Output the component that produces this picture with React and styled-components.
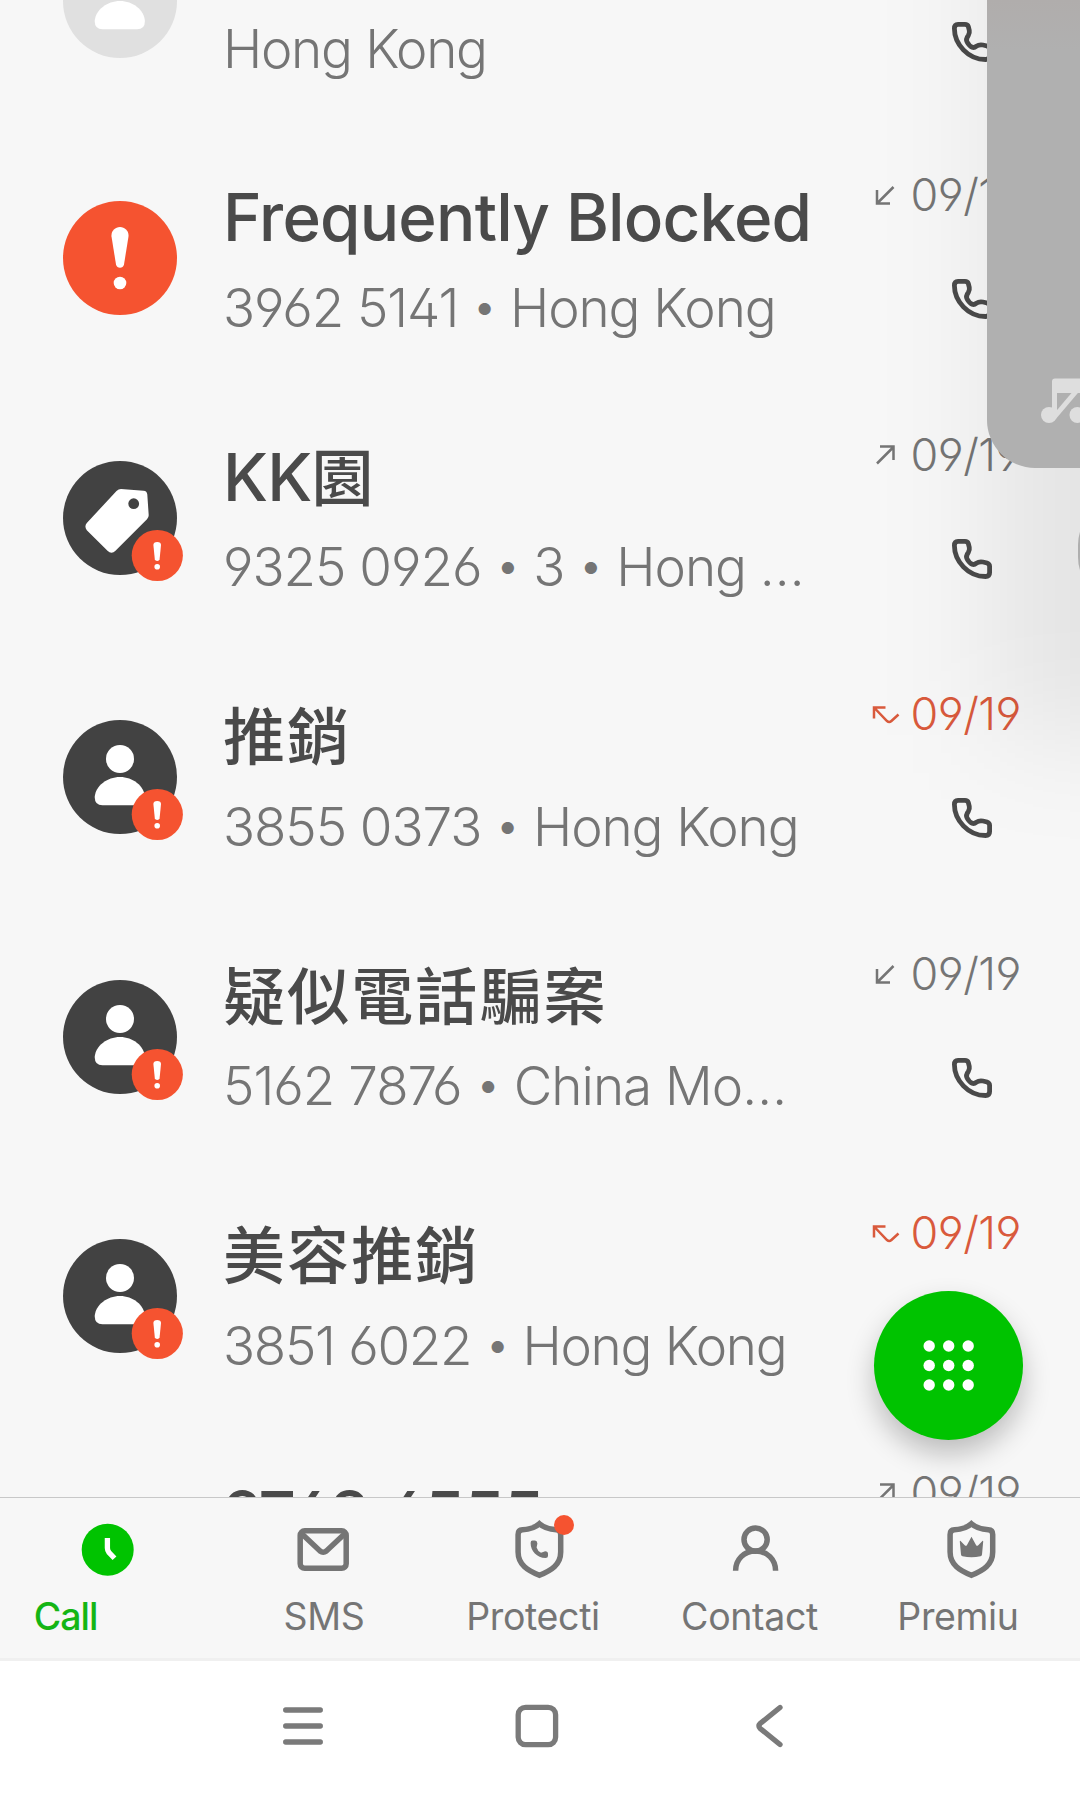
import React from 'react';
import styled, { createGlobalStyle, css } from 'styled-components';

const calls = [
  { id: 0, avatar: 'unknown', sub: 'Hong Kong', tight: 1.3 },
  { id: 1, avatar: 'blocked', title: 'Frequently Blocked', sub: '3962 5141 • Hong Kong', tight: 1.1, type: 'incoming', date: '09/19' },
  { id: 2, avatar: 'tag', title: 'KK', cjkTitle: '園', sub: '9325 0926 • 3 • Hong …', tight: 1.05, type: 'outgoing', date: '09/19' },
  { id: 3, avatar: 'person', cjkTitle: '推銷', sub: '3855 0373 • Hong Kong', tight: 1.1, type: 'missed', date: '09/19' },
  { id: 4, avatar: 'person', cjkTitle: '疑似電話騙案', sub: '5162 7876 • China Mo…', tight: 1, type: 'incoming', date: '09/19' },
  { id: 5, avatar: 'person', cjkTitle: '美容推銷', sub: '3851 6022 • Hong Kong', tight: 1.3, type: 'missed', date: '09/19' },
  { id: 6, avatar: 'unknown', title: '9768 6555', type: 'outgoing', date: '09/19' },
];

const tabs = [
  { name: 'call', text: 'Call', shift: 85 },
  { name: 'sms', text: 'SMS', shift: 0 },
  { name: 'protect', text: 'Protecti', shift: 14 },
  { name: 'contact', text: 'Contact', shift: 13 },
  { name: 'premium', text: 'Premiu', shift: 28 },
];

const arrowPaths = {
  incoming: 'M22.5 4 L6 20.5 M6 7 V20.5 H19',
  outgoing: 'M6 20.5 L22.5 4 M9 3.5 H22.5 V17',
  missed: 'M3 16.5 V5.5 H14.5 M3.5 6 L16 19 Q18.2 21 20.4 19 L27.5 12.5',
};

const avatarColors = {
  unknown: '#e0e0e0',
  blocked: '#f55330',
  tag: '#424242',
  person: '#424242',
};

const SHIELD =
  'M29.4 3.8 C25 8 18 9.5 12.5 9.8 Q8.1 10 8.1 14.5 V32 C8.1 45 18 50.5 29.4 55.3 C41 50.5 50.7 45 50.7 32 V14.5 Q50.7 10 46.3 9.8 C41 9.5 34 8 29.4 3.8 Z';

function Avatar({ kind }) {
  return (
    <AvatarIcon viewBox="0 0 114 114">
      <circle cx="57" cy="57" r="57" fill={avatarColors[kind]} />
      {(kind === 'person' || kind === 'unknown') && (
        <g fill="#fff">
          <circle cx="57" cy="39" r="14" />
          <path d="M31.7 77 C32.5 66 44 57 57 57 S81.2 66 81.9 77 Q82 85.3 74 85.3 H39.5 Q31.7 85.3 31.7 77 Z" />
        </g>
      )}
      {kind === 'tag' && (
        <>
          <path
            fill="#fff"
            d="M58 28 L80.5 29.8 Q84 30 84.3 33.5 L85.7 54 Q85.8 56.5 84 58.3 L52.5 89.8 Q48.5 93.5 44.5 89.8 L23.8 69.2 Q21 65.5 23.8 62 L53.5 30 Q55.5 28 58 28 Z"
          />
          <circle cx="70.7" cy="42.7" r="5.4" fill="#424242" />
        </>
      )}
      {kind === 'blocked' && (
        <g fill="#fff">
          <path d="M57 26 C62 26 66 30 65.5 35.5 L61 63.5 Q60 66.8 57 66.8 T53 63.5 L48.5 35.5 C48 30 52 26 57 26 Z" />
          <circle cx="57" cy="82" r="6.3" />
        </g>
      )}
      {(kind === 'person' || kind === 'tag') && (
        <>
          <circle cx="94.3" cy="94.5" r="25.6" fill="#f55330" />
          <path fill="#fff" d="M90.4 84 Q90.4 81 94.2 81 T98 84 L96.6 98.3 Q96.2 100 94.2 100 T91.8 98.3 Z" />
          <circle cx="94.2" cy="105.8" r="2.8" fill="#fff" />
        </>
      )}
    </AvatarIcon>
  );
}

function Phone() {
  return (
    <PhoneIcon viewBox="0 0 40 40">
      <path d="M6 2.4 H13 Q15.6 2.4 16.3 4.5 L17.3 8.5 Q17.8 11 16.3 13.5 Q13.6 17 15 19.8 Q17.3 24 20.2 25.3 Q22.3 26 24.5 24.2 Q27 22.3 31 23 L35 24 Q37.6 25 37.6 27.5 V33.5 Q37.6 37.5 33.5 37.5 C16 37.5 2.4 22 2.4 6.5 Q2.4 2.4 6 2.4 Z" />
    </PhoneIcon>
  );
}

function TabIcon({ name }) {
  return (
    <TabSvg viewBox="0 0 60 60">
      {name === 'call' && (
        <>
          <circle cx="29.7" cy="29.7" r="26" fill="#00c300" stroke="none" />
          <path d="M29.4 18 V28 Q29.4 30.5 31 32.5 L36.5 38.3" stroke="#fff" strokeWidth="5.3" />
        </>
      )}
      {name === 'sms' && (
        <>
          <rect x="6.2" y="10.8" width="46" height="37.5" rx="4.5" />
          <path d="M7.5 13.5 L26 31 Q29.2 33.4 32.4 31 L51 13.5" />
        </>
      )}
      {(name === 'protect' || name === 'premium') && <path d={SHIELD} />}
      {name === 'protect' && (
        <path
          fill="#757575"
          stroke="none"
          d="M22.5 20.6 H25 Q27.2 20.8 27.4 23.5 L26.6 27.5 Q27.6 31 31 32.8 L35.2 31.3 Q38 31.5 38 33.8 V36 Q38 38 35.5 38 C27 37.8 20.6 31 20.6 23 Q20.6 20.6 22.5 20.6 Z"
        />
      )}
      {name === 'premium' && (
        <path
          fill="#757575"
          stroke="none"
          d="M18.6 20.9 L23 25.6 Q24.2 26.3 25 25 L29.5 16.7 L34 25 Q34.8 26.3 36 25.6 L40.4 20.9 Q41.2 20.7 41.2 21.6 L40 34.6 Q39.8 36 38.5 36.3 Q29.5 38 20.5 36.3 Q19.2 36 19 34.6 L17.8 21.6 Q17.8 20.7 18.6 20.9 Z"
        />
      )}
      {name === 'contact' && (
        <>
          <circle cx="29.6" cy="19.6" r="11.6" />
          <path d="M9.6 50.8 C9.6 39.5 18 31 29.6 31 S49.6 39.5 49.6 50.8" />
        </>
      )}
    </TabSvg>
  );
}

function CallRow({ call, first }) {
  return (
    <Row $first={first}>
      <Avatar kind={call.avatar} />
      <Info $first={first}>
        <Title>
          {call.title}
          {call.cjkTitle && <CjkText>{call.cjkTitle}</CjkText>}
        </Title>
        {call.sub && (
          <Sub $tight={call.tight}>
            {call.sub.split('•').map((part, i) => (
              <React.Fragment key={i}>
                {i > 0 && <Bullet>•</Bullet>}
                {part}
              </React.Fragment>
            ))}
          </Sub>
        )}
      </Info>
      <Meta>
        <DateLine $missed={call.type === 'missed'}>
          {call.date && (
            <>
              <ArrowIcon viewBox="0 0 30 24">
                <path d={arrowPaths[call.type]} />
              </ArrowIcon>
              <span>{call.date}</span>
            </>
          )}
        </DateLine>
        <Phone />
      </Meta>
    </Row>
  );
}

function App() {
  return (
    <Screen>
      <GlobalStyle />
      <CallArea>
        <CallList>
          {calls.map((call) => (
            <CallRow key={call.id} call={call} first={call.id === 0} />
          ))}
        </CallList>
        <DialButton aria-label="Keypad">
          <svg width="60" height="60" viewBox="0 0 60 60" fill="#fff">
            {[10, 29.5, 49].map((y) =>
              [10.2, 29.7, 49.2].map((x) => <circle key={`${x}-${y}`} cx={x} cy={y} r="5.7" />)
            )}
          </svg>
        </DialButton>
      </CallArea>

      <TabBar>
        {tabs.map((tab) => (
          <Tab key={tab.name}>
            <IconHolder>
              <TabIcon name={tab.name} />
              {tab.name === 'protect' && <RedDot />}
            </IconHolder>
            <TabText $active={tab.name === 'call'} $shift={tab.shift}>
              {tab.text}
            </TabText>
          </Tab>
        ))}
      </TabBar>

      <SystemBar>
        <SystemIcon viewBox="0 0 60 60">
          <path d="M12.7 14 H47.3 M12.7 30 H47.3 M12.7 46 H47.3" />
        </SystemIcon>
        <SystemIcon viewBox="0 0 60 60">
          <rect x="11.2" y="11.3" width="37.4" height="37.4" rx="7.5" />
        </SystemIcon>
        <SystemIcon viewBox="0 0 60 60">
          <path d="M39 11.5 L19.2 27.5 Q16.6 30 19.2 32.5 L39 48.5" />
        </SystemIcon>
      </SystemBar>

      <PanelShade />
      <VolumePanel>
        <svg width="60" height="60" viewBox="0 0 60 60">
          <g fill="#dedede">
            <circle cx="22" cy="35" r="8" />
            <circle cx="50.5" cy="35" r="8" />
            <path d="M25 35 V1.5 Q25 -1.5 28 -1.5 H60 V13 H30 V35 Z" />
          </g>
          <path d="M26.5 38 L54 5.5" stroke="#dedede" strokeWidth="5" />
        </svg>
      </VolumePanel>
      <PanelHandle />
    </Screen>
  );
}

const GlobalStyle = createGlobalStyle`
  body {
    margin: 0;
    background: #f7f7f7;
    font-family: Inter, 'Noto Sans CJK TC', sans-serif;
  }
`;

const Screen = styled.div`
  position: relative;
  display: flex;
  flex-direction: column;
  width: 1080px;
  height: 1793px;
  overflow: hidden;
  background: #f7f7f7;
`;

const CallArea = styled.main`
  position: relative;
  height: 1497px;
`;

const CallList = styled.div`
  display: flex;
  flex-direction: column;
  justify-content: flex-end;
  height: 100%;
  overflow: hidden;

  /* the last row runs on under the tab bar */
  & > :last-child {
    margin-bottom: -188px;
  }
`;

const Row = styled.section`
  display: flex;
  flex-shrink: 0;
  align-items: flex-start;
  height: ${({ $first }) => ($first ? 257 : 259.5)}px;
  padding-left: 63px;
`;

const AvatarIcon = styled.svg`
  flex-shrink: 0;
  width: 114px;
  height: 114px;
  margin-top: 73px;
  overflow: visible;
`;

const Info = styled.div`
  width: 620px;
  margin-left: 46px;
  padding-top: ${({ $first }) => ($first ? 49 : 51)}px;
  white-space: nowrap;
  font-feature-settings: 'cv02', 'cv03', 'cv04';
`;

const Title = styled.h2`
  height: 78px;
  margin: 0;
  color: #4a4a4a;
  font-size: 65.5px;
  font-weight: 500;
  letter-spacing: -0.8px;
  line-height: 78px;
`;

const CjkText = styled.span`
  font-size: 62px;
  letter-spacing: 2.1px;
  line-height: 1;
`;

const Sub = styled.p`
  margin: 18.5px 0 0;
  color: #757575;
  font-size: 53px;
  font-weight: 360;
  letter-spacing: ${({ $tight }) => -$tight}px;
  line-height: 64px;
`;

const Bullet = styled.span`
  font-size: 45px;
  line-height: 1;
  vertical-align: 5px;
`;

const Meta = styled.div`
  display: flex;
  flex-direction: column;
  width: 170px;
  margin-left: 28px;
  padding-top: 40px;
`;

const DateLine = styled.div`
  display: flex;
  align-items: center;
  gap: 9.5px;
  height: 54px;
  color: ${({ $missed }) => ($missed ? '#d95a3c' : '#757575')};
  font-size: 45px;
  font-weight: 360;
  letter-spacing: -0.5px;
  line-height: 54px;
  font-feature-settings: 'cv03', 'cv04';
`;

const ArrowIcon = styled.svg`
  width: 30px;
  height: 24px;
  fill: none;
  stroke: currentColor;
  stroke-width: 2.5;
`;

const PhoneIcon = styled.svg`
  width: 40px;
  height: 40px;
  margin: 57px 0 0 80.5px;
  fill: none;
  stroke: #4a4a4a;
  stroke-width: 4.8;
`;

const DialButton = styled.button`
  position: absolute;
  right: 57px;
  bottom: 57px;
  display: flex;
  align-items: center;
  justify-content: center;
  width: 149px;
  height: 149px;
  padding: 0;
  border: 0;
  border-radius: 50%;
  background: #00c300;
  box-shadow: 0 14px 28px rgba(0, 0, 0, 0.24);
`;

const TabBar = styled.nav`
  position: relative;
  display: flex;
  box-sizing: border-box;
  height: 164px;
  border-top: 1px solid #c8c8c8;
  border-bottom: 3px solid #f0f0f0;
  background: #f7f7f7;
`;

const Tab = styled.div`
  display: flex;
  flex: 1;
  flex-direction: column;
  align-items: center;
  padding-top: 22px;
`;

const IconHolder = styled.div`
  position: relative;
  width: 60px;
  height: 60px;
`;

const TabSvg = styled.svg`
  display: block;
  width: 60px;
  height: 60px;
  fill: none;
  stroke: #757575;
  stroke-width: 5.5;
`;

const RedDot = styled.i`
  position: absolute;
  top: -5px;
  right: -4px;
  width: 20px;
  height: 20px;
  border-radius: 50%;
  background: #f55330;
`;

const TabText = styled.span`
  margin-top: 13.5px;
  color: #757575;
  font-size: 37.5px;
  font-weight: 440;
  letter-spacing: -0.35px;
  line-height: 46px;
  padding-right: ${({ $shift }) => $shift}px;

  ${({ $active }) =>
    $active &&
    css`
      color: #14b514;
      font-weight: 500;
      letter-spacing: -1px;
    `}
`;

const SystemBar = styled.footer`
  position: relative;
  display: flex;
  align-items: flex-start;
  gap: 174px;
  height: 132px;
  padding: 34.5px 0 0 272.5px;
  box-sizing: border-box;
  background: #fff;
`;

const SystemIcon = styled.svg`
  width: 60px;
  height: 60px;
  fill: none;
  stroke: #7a7a7a;
  stroke-width: 5.3;
  stroke-linecap: round;
`;

const PanelShade = styled.div`
  position: absolute;
  top: -400px;
  left: 992px;
  width: 500px;
  height: 1135px;
  background: rgba(0, 0, 0, 0.075);
  filter: blur(58px);
  pointer-events: none;
`;

const VolumePanel = styled.aside`
  position: absolute;
  top: 0;
  left: 987px;
  box-sizing: border-box;
  width: 93px;
  height: 468px;
  padding: 380px 0 0 40px;
  border-bottom-left-radius: 48px;
  background: linear-gradient(#b0adac, #b0b0b0 50px);
  overflow: hidden;

  svg {
    overflow: visible;
  }
`;

const PanelHandle = styled.div`
  position: absolute;
  top: 500px;
  left: 1077.5px;
  width: 90px;
  height: 102px;
  border-radius: 46px;
  background: #aeaeae;
`;

export default App;
